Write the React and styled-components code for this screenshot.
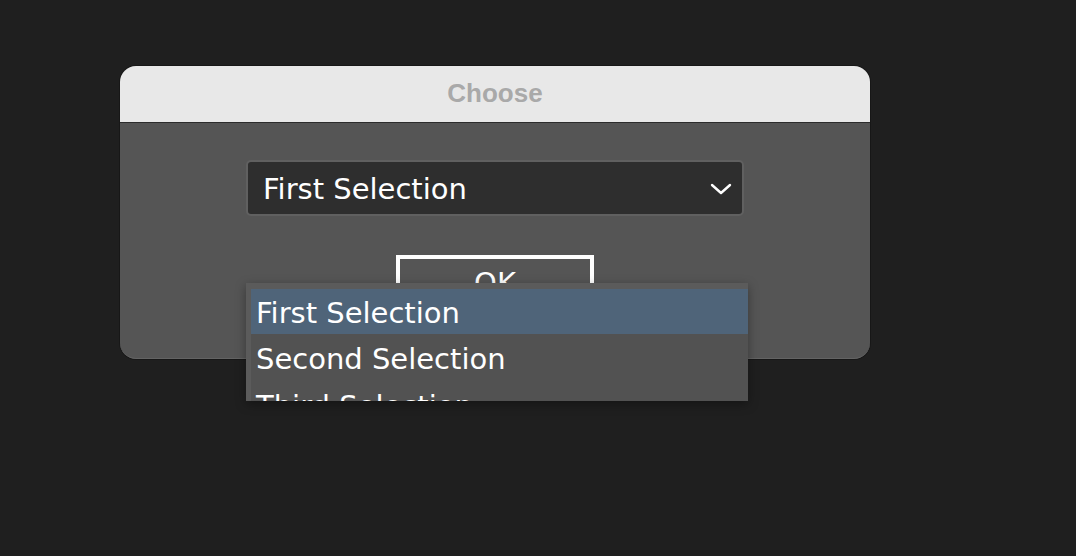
import React from 'react';
import styled, { createGlobalStyle } from 'styled-components';

const GlobalStyle = createGlobalStyle`
  html, body {
    margin: 0;
    padding: 0;
    background: #1f1f1f;
  }
  body {
    font-family: "DejaVu Sans", "Noto Sans", sans-serif;
  }
`;

const Stage = styled.div`
  width: 1076px;
  height: 556px;
  box-sizing: border-box;
  padding: 66px 0 0 120px;
  background: #1f1f1f;
`;

const Window = styled.div`
  position: relative;
  width: 750px;
  border-radius: 16px;
  box-shadow: 0 0 0 1px rgba(0, 0, 0, 0.25);
`;

const TitleBar = styled.div`
  height: 57px;
  box-sizing: border-box;
  background: #e8e8e8;
  border-radius: 16px 16px 0 0;
  border-bottom: 1px solid #2c2c2c;
  display: flex;
  align-items: center;
  justify-content: center;
`;

const Title = styled.span`
  font-family: "Liberation Sans", Arial, sans-serif;
  font-weight: bold;
  font-size: 26px;
  color: #a9a9a9;
  margin-bottom: 2px;
`;

const Body = styled.div`
  position: relative;
  height: 236px;
  box-sizing: border-box;
  background: #555555;
  border-radius: 0 0 16px 16px;
  border-bottom: 1px solid #636363;
  padding-top: 37px;
  display: flex;
  flex-direction: column;
  align-items: center;
`;

const Select = styled.div`
  width: 498px;
  height: 56px;
  flex-shrink: 0;
  box-sizing: border-box;
  background: #2e2e2e;
  border: 2px solid #606060;
  border-radius: 5px;
  display: flex;
  align-items: center;
  justify-content: space-between;
  padding: 1px 10px 0 15px;
  color: #ffffff;
  font-size: 29px;
`;

const OkButton = styled.button`
  margin-top: 39px;
  width: 198px;
  height: 56px;
  flex-shrink: 0;
  box-sizing: border-box;
  background: transparent;
  border: 4px solid #ffffff;
  border-bottom-color: #e4e4e4;
  color: #ffffff;
  font-family: "DejaVu Sans", "Noto Sans", sans-serif;
  font-size: 29px;
  padding: 0;
`;

const Menu = styled.div`
  position: absolute;
  top: 160px;
  left: 126px;
  width: 502px;
  height: 118px;
  box-sizing: border-box;
  overflow: hidden;
  background: #525252;
  border-top: 6px solid #5b5b5b;
  border-left: 5px solid #5b5b5b;
  box-shadow: 0 3px 10px rgba(0, 0, 0, 0.35), inset 0 1px 0 #666;
`;

const Option = styled.div`
  height: ${({ active }) => (active ? '45px' : '47px')};
  box-sizing: border-box;
  display: flex;
  align-items: center;
  padding: 2px 0 0 5px;
  background: ${({ active }) => (active ? '#4f6479' : 'transparent')};
  color: #ffffff;
  font-size: 29px;
  white-space: nowrap;
`;

const Chevron = () => (
  <svg width="22" height="14" viewBox="0 0 22 14">
    <path d="M2 3 L11 11 L20 3" fill="none" stroke="#ffffff" strokeWidth="2.4" strokeLinecap="round" strokeLinejoin="round" />
  </svg>
);

const options = ['First Selection', 'Second Selection', 'Third Selection'];

const App = () => {
  return (
    <>
      <GlobalStyle />
      <Stage>
        <Window>
          <TitleBar>
            <Title>Choose</Title>
          </TitleBar>
          <Body>
            <Select>
              <span>First Selection</span>
              <Chevron />
            </Select>
            <OkButton>OK</OkButton>
            <Menu>
              {options.map((opt, i) => (
                <Option key={opt} active={i === 0}>
                  {opt}
                </Option>
              ))}
            </Menu>
          </Body>
        </Window>
      </Stage>
    </>
  );
};

export default App;
